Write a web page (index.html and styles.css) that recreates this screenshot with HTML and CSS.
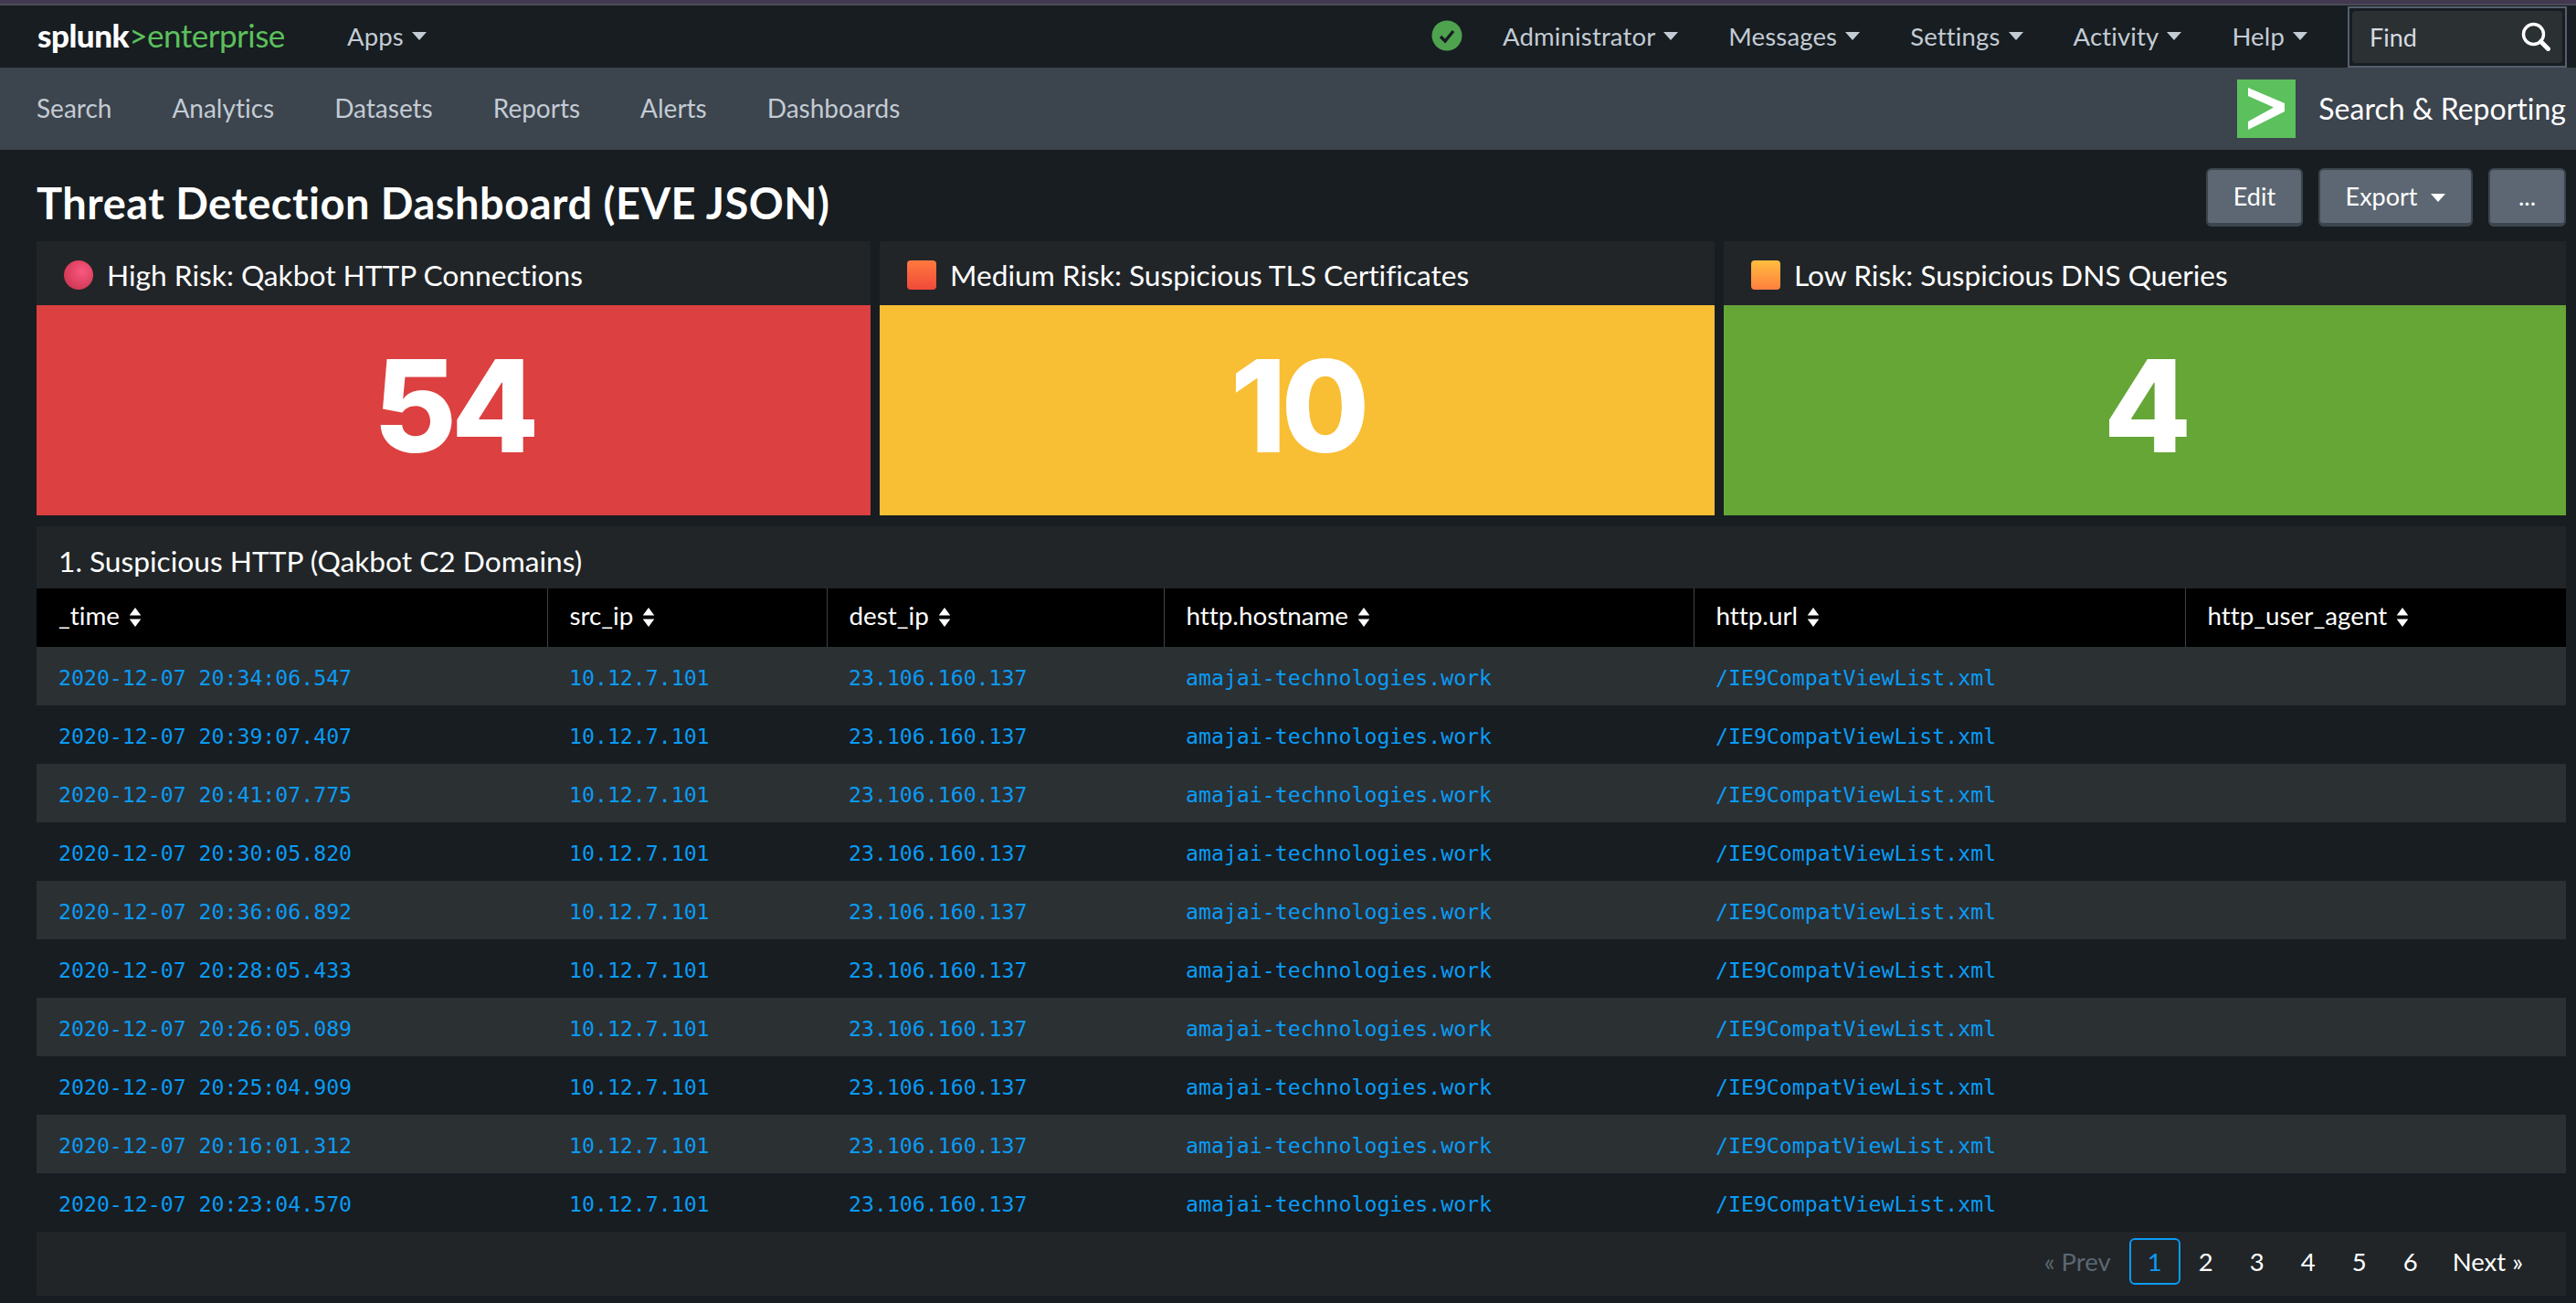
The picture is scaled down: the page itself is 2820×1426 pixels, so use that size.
FILE: index.html
```html
<!DOCTYPE html>
<html lang="en">
<head>
  <meta charset="UTF-8">
  <meta name="viewport" content="width=device-width, initial-scale=1.0">
  <title>Threat Detection Dashboard (EVE JSON)</title>
  <link rel="stylesheet" href="styles.css">
</head>
<body>

  <div class="top-strip"></div>

  <header class="system-bar">
    <a class="logo"><span class="logo-white">splunk</span><span class="logo-gt">&gt;</span><span class="logo-green">enterprise</span></a>
    <a class="sys-item apps">Apps <span class="caret"></span></a>
    <div class="sys-right">
      <svg class="health" viewBox="0 0 34 34">
        <circle cx="17" cy="17" r="16.5" fill="#4fa34f"/>
        <path d="M10 18l5 5 9-11" fill="none" stroke="#171d21" stroke-width="3.4"/>
      </svg>
      <a class="sys-item">Administrator <span class="caret"></span></a>
      <a class="sys-item">Messages <span class="caret"></span></a>
      <a class="sys-item">Settings <span class="caret"></span></a>
      <a class="sys-item">Activity <span class="caret"></span></a>
      <a class="sys-item">Help <span class="caret"></span></a>
      <div class="find">
        <div class="find-inner">
          <span>Find</span>
          <svg class="find-icon" viewBox="0 0 32 32">
            <circle cx="13.5" cy="13.5" r="11" fill="none" stroke="#fff" stroke-width="3.4"/>
            <path d="M21.5 21.5l8 8" stroke="#fff" stroke-width="5" stroke-linecap="round"/>
          </svg>
        </div>
      </div>
    </div>
  </header>

  <nav class="app-bar">
    <a>Search</a>
    <a>Analytics</a>
    <a>Datasets</a>
    <a>Reports</a>
    <a>Alerts</a>
    <a>Dashboards</a>
    <div class="app-name">
      <svg class="app-logo" viewBox="0 0 64 64">
        <rect width="64" height="64" fill="#5cc05c"/>
        <path d="M12 9l40 17v9L12 55V46l28-15.500L12 18z" fill="#fff"/>
      </svg>
      <span>Search &amp; Reporting</span>
    </div>
  </nav>

  <main class="content">
    <div class="title-row">
      <h1>Threat Detection Dashboard (EVE JSON)</h1>
      <div class="actions">
        <button class="btn btn-edit">Edit</button>
        <button class="btn btn-export">Export <span class="caret caret-white"></span></button>
        <button class="btn btn-more">...</button>
      </div>
    </div>

    <div class="tiles">
      <section class="tile">
        <h2 class="tile-head"><span class="mark mark-high"></span>High Risk: Qakbot HTTP Connections</h2>
        <div class="tile-value red">54</div>
      </section>
      <section class="tile">
        <h2 class="tile-head"><span class="mark mark-medium"></span>Medium Risk: Suspicious TLS Certificates</h2>
        <div class="tile-value yellow">10</div>
      </section>
      <section class="tile">
        <h2 class="tile-head"><span class="mark mark-low"></span>Low Risk: Suspicious DNS Queries</h2>
        <div class="tile-value green">4</div>
      </section>
    </div>

    <section class="panel">
      <h2 class="panel-title">1. Suspicious HTTP (Qakbot C2 Domains)</h2>
      <table class="results">
        <colgroup>
          <col class="col-time"><col class="col-src"><col class="col-dest"><col class="col-host"><col class="col-url"><col class="col-agent">
        </colgroup>
        <thead>
          <tr>
            <th>_time <svg class="sort" viewBox="0 0 14 20"><path d="M7 0l6 8H1zM7 20l6-8H1z" fill="#fff"/></svg></th>
            <th>src_ip <svg class="sort" viewBox="0 0 14 20"><path d="M7 0l6 8H1zM7 20l6-8H1z" fill="#fff"/></svg></th>
            <th>dest_ip <svg class="sort" viewBox="0 0 14 20"><path d="M7 0l6 8H1zM7 20l6-8H1z" fill="#fff"/></svg></th>
            <th>http.hostname <svg class="sort" viewBox="0 0 14 20"><path d="M7 0l6 8H1zM7 20l6-8H1z" fill="#fff"/></svg></th>
            <th>http.url <svg class="sort" viewBox="0 0 14 20"><path d="M7 0l6 8H1zM7 20l6-8H1z" fill="#fff"/></svg></th>
            <th>http_user_agent <svg class="sort" viewBox="0 0 14 20"><path d="M7 0l6 8H1zM7 20l6-8H1z" fill="#fff"/></svg></th>
          </tr>
        </thead>
        <tbody>
          <tr><td>2020-12-07 20:34:06.547</td><td>10.12.7.101</td><td>23.106.160.137</td><td>amajai-technologies.work</td><td>/IE9CompatViewList.xml</td><td></td></tr>
          <tr><td>2020-12-07 20:39:07.407</td><td>10.12.7.101</td><td>23.106.160.137</td><td>amajai-technologies.work</td><td>/IE9CompatViewList.xml</td><td></td></tr>
          <tr><td>2020-12-07 20:41:07.775</td><td>10.12.7.101</td><td>23.106.160.137</td><td>amajai-technologies.work</td><td>/IE9CompatViewList.xml</td><td></td></tr>
          <tr><td>2020-12-07 20:30:05.820</td><td>10.12.7.101</td><td>23.106.160.137</td><td>amajai-technologies.work</td><td>/IE9CompatViewList.xml</td><td></td></tr>
          <tr><td>2020-12-07 20:36:06.892</td><td>10.12.7.101</td><td>23.106.160.137</td><td>amajai-technologies.work</td><td>/IE9CompatViewList.xml</td><td></td></tr>
          <tr><td>2020-12-07 20:28:05.433</td><td>10.12.7.101</td><td>23.106.160.137</td><td>amajai-technologies.work</td><td>/IE9CompatViewList.xml</td><td></td></tr>
          <tr><td>2020-12-07 20:26:05.089</td><td>10.12.7.101</td><td>23.106.160.137</td><td>amajai-technologies.work</td><td>/IE9CompatViewList.xml</td><td></td></tr>
          <tr><td>2020-12-07 20:25:04.909</td><td>10.12.7.101</td><td>23.106.160.137</td><td>amajai-technologies.work</td><td>/IE9CompatViewList.xml</td><td></td></tr>
          <tr><td>2020-12-07 20:16:01.312</td><td>10.12.7.101</td><td>23.106.160.137</td><td>amajai-technologies.work</td><td>/IE9CompatViewList.xml</td><td></td></tr>
          <tr><td>2020-12-07 20:23:04.570</td><td>10.12.7.101</td><td>23.106.160.137</td><td>amajai-technologies.work</td><td>/IE9CompatViewList.xml</td><td></td></tr>
        </tbody>
      </table>
      <div class="pagination">
        <span class="prev">« Prev</span>
        <span class="page current">1</span>
        <span class="page">2</span>
        <span class="page">3</span>
        <span class="page">4</span>
        <span class="page">5</span>
        <span class="page">6</span>
        <span class="next">Next »</span>
      </div>
    </section>
  </main>

</body>
</html>
```

FILE: styles.css
```css
html, body {
  margin: 0;
  background: #171d21;
}
body {
  font-family: Lato, "Open Sans", sans-serif;
  font-variant-ligatures: none;
  color: #fff;
  width: 2820px;
  height: 1426px;
  overflow: hidden;
}
a {
  color: inherit;
  text-decoration: none;
}
h1, h2 {
  margin: 0;
  font-weight: 400;
}

.top-strip {
  height: 4px;
  background: #423850;
  border-bottom: 2px solid #4c4c58;
}

/* system bar */
.system-bar {
  height: 68px;
  display: flex;
  align-items: center;
  padding-left: 41px;
  background: #171d21;
}
.logo {
  font-size: 35px;
  font-weight: 400;
  letter-spacing: -0.5px;
  margin-top: -4px;
  width: 339px;
}
.logo-white {
  color: #fff;
  font-weight: 900;
}
.logo-gt, .logo-green {
  color: #5cc05c;
}
.sys-item {
  font-size: 27.5px;
  letter-spacing: 0.15px;
  color: #c3cbd4;
  display: flex;
  align-items: center;
  gap: 9px;
  margin-right: 55px;
  padding-bottom: 2px;
}
.caret {
  display: inline-block;
  width: 0;
  height: 0;
  border-left: 8px solid transparent;
  border-right: 8px solid transparent;
  border-top: 9px solid #c3cbd4;
}
.caret-white {
  border-top-color: #fff;
  margin-left: 8px;
  vertical-align: 4px;
}
.sys-right {
  margin-left: auto;
  display: flex;
  align-items: center;
  padding-right: 10px;
}
.health {
  width: 34px;
  height: 34px;
  margin-right: 44px;
  margin-bottom: 2px;
}
.sys-right .sys-item:nth-last-child(2) {
  margin-right: 44px;
}
.find {
  width: 240px;
  height: 67px;
  box-sizing: border-box;
  border: 2px solid #55606d;
  padding: 3px;
}
.find-inner {
  height: 100%;
  box-sizing: border-box;
  background: #2b3033;
  border-radius: 4px;
  display: flex;
  align-items: center;
  justify-content: space-between;
  padding: 0 13px 0 19px;
  font-size: 27px;
  color: #d5dbe1;
}
.find-icon {
  width: 32px;
  height: 32px;
}

/* app bar */
.app-bar {
  height: 90px;
  background: #3c444d;
  display: flex;
  align-items: center;
  padding: 0 11px 0 40px;
  gap: 66px;
  font-size: 28px;
  color: #c3cbd4;
}
.app-bar a {
  padding-bottom: 2px;
}
.app-name {
  margin-left: auto;
  display: flex;
  align-items: center;
  gap: 25px;
  font-size: 32px;
  color: #fff;
}
.app-name span {
  padding-bottom: 2px;
}
.app-logo {
  width: 64px;
  height: 64px;
}

/* title row */
.content {
  padding: 0 11px 7px 40px;
}
.title-row {
  height: 100px;
  display: flex;
  align-items: flex-start;
  justify-content: space-between;
}
h1 {
  font-size: 47px;
  font-weight: 700;
  letter-spacing: 0.5px;
  margin-top: 30px;
  line-height: 56px;
}
.actions {
  display: flex;
  gap: 17px;
  margin-top: 20px;
}
.btn {
  height: 64px;
  box-sizing: border-box;
  background: #5c6773;
  border: 2px solid #3c444d;
  border-bottom-width: 4px;
  border-radius: 6px;
  color: #fff;
  font-family: inherit;
  font-size: 27px;
  padding: 0 0 2px;
}
.btn-edit {
  width: 106px;
}
.btn-export {
  width: 169px;
}
.btn-more {
  width: 85px;
}

/* single value tiles */
.tiles {
  display: grid;
  grid-template-columns: 913px 914px 1fr;
  gap: 10px;
}
.tile {
  background: #212528;
}
.tile-head {
  height: 70px;
  box-sizing: border-box;
  display: flex;
  align-items: center;
  gap: 15px;
  padding: 3px 0 0 30px;
  font-size: 31.7px;
}
.mark {
  width: 32px;
  height: 32px;
  flex: none;
  margin-top: 1px;
}
.mark-high {
  border-radius: 50%;
  background: radial-gradient(circle at 62% 38%, #f9587f, #d43a57 70%, #a8404f);
}
.mark-medium {
  border-radius: 4px;
  background: linear-gradient(#ff7a3d, #f0493a);
}
.mark-low {
  border-radius: 4px;
  background: linear-gradient(#ffbe3f, #ff7f3f);
}
.tile-value {
  height: 230px;
  box-sizing: border-box;
  padding-bottom: 10px;
  display: flex;
  align-items: center;
  justify-content: center;
  font-family: Inter, Lato, sans-serif;
  font-size: 140px;
  font-weight: 800;
  letter-spacing: -6px;
  line-height: 1;
}
.red {
  background: #dc4040;
}
.yellow {
  background: #f8be34;
}
.green {
  background: #65a637;
}

/* results table */
.panel {
  margin-top: 12px;
  background: #212528;
}
.panel-title {
  height: 68px;
  box-sizing: border-box;
  display: flex;
  align-items: center;
  padding: 7px 0 0 24px;
  font-size: 31.7px;
}
.results {
  width: 100%;
  border-collapse: collapse;
  table-layout: fixed;
  background: #171d21;
}
.col-time { width: 559px; }
.col-src { width: 306px; }
.col-dest { width: 369px; }
.col-host { width: 580px; }
.col-url { width: 538px; }
.col-agent { width: 417px; }

.results th {
  height: 64px;
  box-sizing: border-box;
  padding: 0 0 5px 24px;
  background: #000;
  border-right: 1px solid #3c444d;
  text-align: left;
  font-size: 27.8px;
  font-weight: 400;
}
.results th:last-child {
  border-right: none;
}
.sort {
  width: 16px;
  height: 21px;
  margin-left: 2px;
  vertical-align: -2px;
}
.results td {
  height: 64px;
  box-sizing: border-box;
  padding: 2px 0 0 24px;
  font-family: "DejaVu Sans Mono", monospace;
  font-size: 23.2px;
  color: #0a9bf5;
}
.results tbody tr:nth-child(odd) {
  background: #2b3033;
}

.pagination {
  height: 70px;
  box-sizing: border-box;
  display: flex;
  align-items: center;
  justify-content: flex-end;
  padding: 0 47px 5px 0;
  font-size: 27.5px;
}
.prev {
  color: #5c6773;
  margin-right: 20px;
}
.page {
  width: 56px;
  height: 51px;
  box-sizing: border-box;
  display: flex;
  align-items: center;
  justify-content: center;
}
.current {
  color: #0a9bf5;
  border: 2px solid #0a9bf5;
  border-radius: 6px;
}
.next {
  margin-left: 18px;
}
```
